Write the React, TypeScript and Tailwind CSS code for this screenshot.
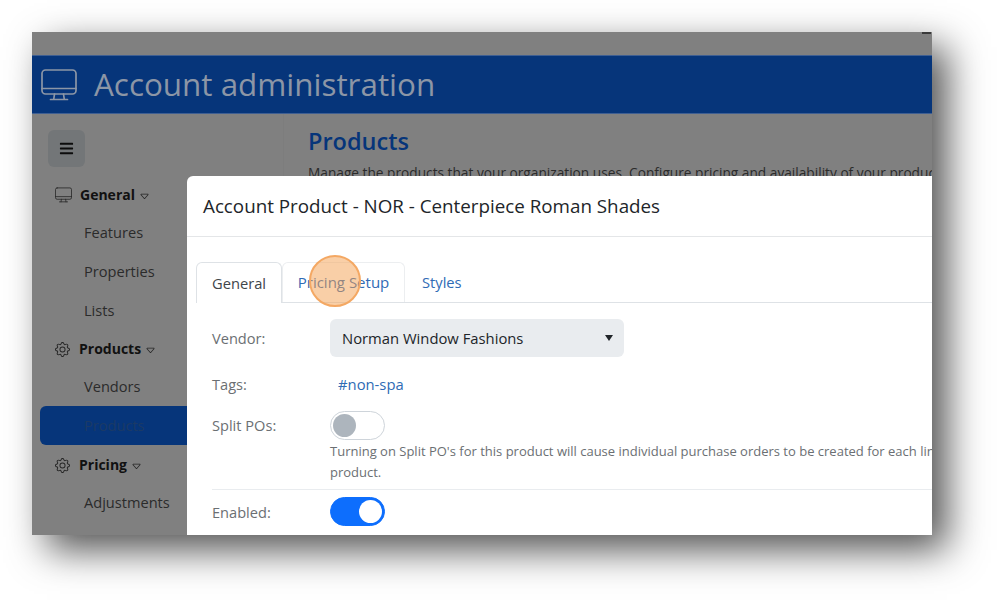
import { BsCaretDown, BsGear } from 'react-icons/bs'
import { FaBars } from 'react-icons/fa'

function MonitorIcon({ className }: { className: string }) {
  return (
    <svg viewBox="0 0 36 32" fill="none" stroke="currentColor" strokeWidth="1.7" strokeLinecap="round" className={className}>
      <rect x="1" y="1" width="34" height="24" rx="3.5" />
      <path d="M1 19.5h34M13.5 25l-.8 5.5M22.5 25l.8 5.5M9.5 30.5h17" />
    </svg>
  )
}

function SectionRow({ icon, label, className }: { icon: React.ReactNode; label: string; className: string }) {
  return (
    <div className={`flex items-center ${className}`}>
      <span className="flex w-[17px] shrink-0 justify-center text-[#262626]">{icon}</span>
      <span className="ml-[8px] text-[14px] leading-[20px] font-bold text-[#111]">{label}</span>
      <BsCaretDown className="ml-[4px] mt-[2px] text-[11px] text-[#222]" />
    </div>
  )
}

function SubItem({ label, active }: { label: string; active?: boolean }) {
  return (
    <div
      className={`flex h-[39px] items-center rounded-l-[6px] pl-[44px] text-[14.6px] ${
        active ? 'bg-[#06357a] text-[#1b3a66]' : 'text-[#2b2b2b]'
      }`}
    >
      {label}
    </div>
  )
}

function Toggle({ on }: { on?: boolean }) {
  return (
    <div
      className={`flex h-[29px] w-[55px] items-center rounded-full border p-[2px] ${
        on ? 'justify-end border-[#0d6efd] bg-[#0d6efd]' : 'justify-start border-[#ced4da] bg-white'
      }`}
    >
      <div className={`h-[23px] w-[23px] rounded-full ${on ? 'bg-white' : 'bg-[#adb5bd]'}`} />
    </div>
  )
}

function FormLabel({ text }: { text: string }) {
  return <div className="w-[118px] shrink-0 text-[14.6px] leading-[20px] text-[#6b6f73]">{text}</div>
}

export default function App() {
  return (
    <div className="h-[600px] w-[997px] overflow-hidden bg-white p-[32px] font-['Open_Sans','Noto_Sans',sans-serif]">
      <div className="relative flex h-[503px] w-[900px] flex-col overflow-hidden bg-[#808080] shadow-[15px_15px_36px_rgba(0,0,0,0.68)]">
        <div className="flex h-[23px] shrink-0 justify-end pr-[1px]">
          <div className="h-[2px] w-[9px] bg-[#3a3a3a]" />
        </div>

        <header className="flex h-[59px] shrink-0 items-center border-y border-[#3f5f92] bg-[#06357a] pl-[9px]">
          <MonitorIcon className="h-[32px] w-[36px] text-[#8c96a6]" />
          <h1 className="ml-[17px] -mt-[1px] text-[31.4px] leading-none text-[#8c96a6]">Account administration</h1>
        </header>

        <div className="flex min-h-0 flex-1">
          <aside className="w-[251px] shrink-0 pt-[16px] pl-[8px]">
            <div className="ml-[8px] flex h-[37px] w-[37px] items-center justify-center rounded-[6px] bg-[#737678]">
              <FaBars className="text-[15px] text-[#0c0c0c]" />
            </div>
            <SectionRow icon={<MonitorIcon className="h-[16px] w-[17px]" />} label="General" className="mt-[18px] ml-[15px] h-[20px]" />
            <div className="mt-[8px]">
              <SubItem label="Features" />
              <SubItem label="Properties" />
              <SubItem label="Lists" />
            </div>
            <SectionRow icon={<BsGear className="text-[15px]" />} label="Products" className="mt-[9px] ml-[14px] h-[20px]" />
            <div className="mt-[8px]">
              <SubItem label="Vendors" />
              <SubItem label="Products" active />
            </div>
            <SectionRow icon={<BsGear className="text-[15px]" />} label="Pricing" className="mt-[10px] ml-[14px] h-[20px]" />
            <div className="mt-[8px]">
              <SubItem label="Adjustments" />
            </div>
          </aside>

          <main className="min-w-0 flex-1 overflow-hidden border-l border-[#7d7d7d] pl-[24px] pt-[11px]">
            <h2 className="text-[23.5px] leading-[32px] font-semibold text-[#06357a]">Products</h2>
            <p className="mt-[7px] text-[13.7px] leading-[18px] whitespace-nowrap text-[#2b2b2b]">
              Manage the products that your organization uses. Configure pricing and availability of your products
            </p>
          </main>
        </div>

        <div className="absolute top-[144px] left-[155px] h-[400px] w-[800px] rounded-tl-[6px] bg-white">
          <div className="flex h-[61px] items-center border-b border-[#e4e6e8] pt-[1px] pl-[16px] text-[18.8px] text-[#212529]">
            Account Product - NOR - Centerpiece Roman Shades
          </div>

          <div className="relative mt-[25px] ml-[9px] flex h-[41px] border-b border-[#dee2e6] text-[14.7px]">
            <div className="-mb-px flex h-[41px] w-[86px] items-center justify-center rounded-t-[6px] border border-b-0 border-[#dee2e6] bg-white text-[#40454a]">
              General
            </div>
            <div className="flex h-[40px] w-[123px] items-center justify-center rounded-t-[6px] border border-b-0 border-[#eceef0] text-[15px] text-[#2f6bb5]">
              Pricing Setup
            </div>
            <div className="ml-[17px] flex h-[40px] items-center text-[#2f6bb5]">Styles</div>
            <div className="absolute top-[-7px] left-[113px] h-[52px] w-[52px] rounded-full border-[2px] border-[#f4a863] bg-[#f4a050]/50" />
          </div>

          <div className="ml-[25px] pt-[16px]">
            <div className="flex h-[38px] items-center">
              <FormLabel text="Vendor:" />
              <div className="flex h-[38px] w-[294px] items-center justify-between rounded-[6px] bg-[#e9ecef] pr-[11px] pl-[12px] text-[14.8px] text-[#212529]">
                Norman Window Fashions
                <span className="h-0 w-0 border-x-[4px] border-t-[6px] border-x-transparent border-t-[#212529]" />
              </div>
            </div>

            <div className="mt-[17px] flex h-[20px] items-center">
              <FormLabel text="Tags:" />
              <span className="ml-[8px] text-[14.8px] text-[#2f6bb5]">#non-spa</span>
            </div>

            <div className="mt-[17px] flex">
              <div className="pt-[4px]">
                <FormLabel text="Split POs:" />
              </div>
              <div>
                <Toggle />
                <p className="mt-[1px] w-[695px] text-[13px] leading-[21px] text-[#6b6f73]">
                  Turning on Split PO's for this product will cause individual purchase orders to be created for each line item on this
                  product.
                </p>
              </div>
            </div>

            <div className="mt-[6px] border-t border-[#e9ecef] pt-[7px]">
              <div className="flex items-center">
                <FormLabel text="Enabled:" />
                <Toggle on />
              </div>
            </div>
          </div>
        </div>
      </div>
    </div>
  )
}
